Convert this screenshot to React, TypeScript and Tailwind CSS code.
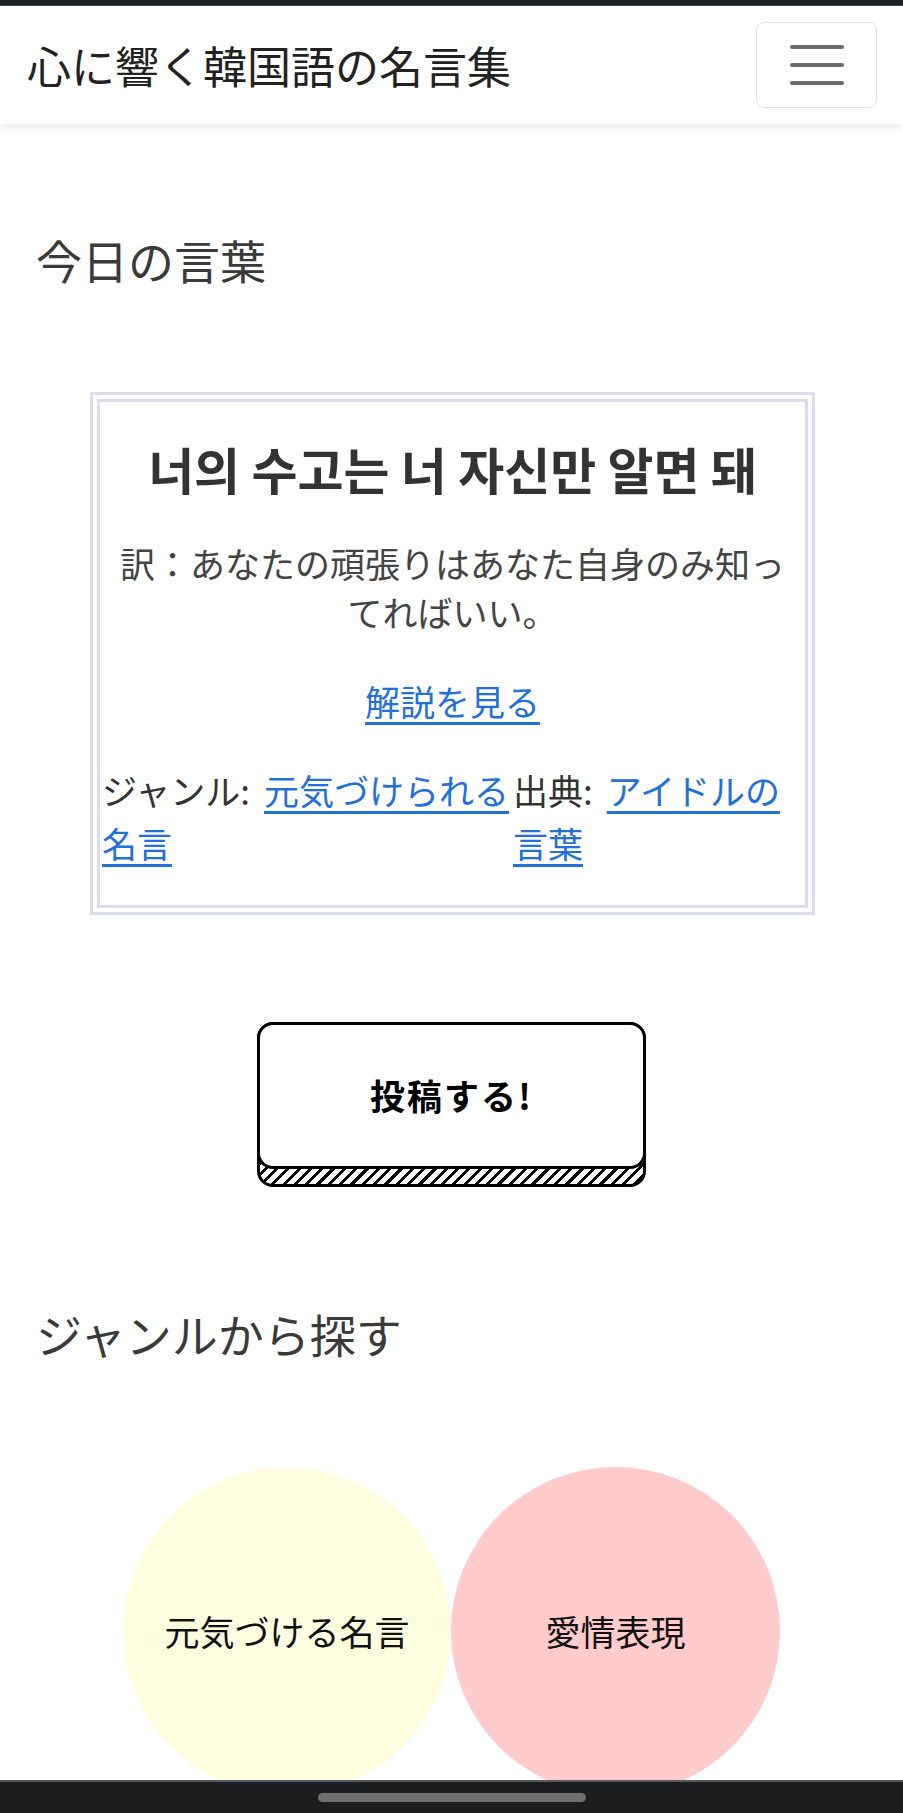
const JP = "font-['Noto_Sans_CJK_JP','Noto_Sans',sans-serif]";

function Toggler() {
  return (
    <button className="flex h-[86px] w-[121px] flex-col items-center justify-center gap-[14px] rounded-[8px] border border-[#e3e3e3] bg-white">
      <span className="h-[4px] w-[54px] rounded-full bg-[#6b6b6b]" />
      <span className="h-[4px] w-[54px] rounded-full bg-[#6b6b6b]" />
      <span className="h-[4px] w-[54px] rounded-full bg-[#6b6b6b]" />
    </button>
  );
}

function QuoteCard() {
  return (
    <div className="ml-[90px] w-[725px] border-[10px] border-double border-[#dcdcef] bg-white pt-[40px] pb-[36px]">
      <h2 className="text-center font-['Noto_Sans_CJK_KR',sans-serif] text-[50px] font-bold leading-[53px] text-[#333]">
        너의 수고는 너 자신만 알면 돼
      </h2>
      <p className="mt-[43px] px-[12px] text-center text-[35px] leading-[49px] text-[#444]">
        訳：あなたの頑張りはあなた自身のみ知ってればいい。
      </p>
      <p className="mt-[40px] text-center text-[35px] leading-[49px]">
        <a href="#" className="text-[#2470d9] underline underline-offset-[6px]">
          解説を見る
        </a>
      </p>
      <div className="mt-[38px] flex pl-[2px] text-[35px] leading-[53px] text-[#333]">
        <div className="w-[411px]">
          ジャンル:
          <a href="#" className="ml-[14px] text-[#2470d9] underline underline-offset-[6px]">
            元気づけられる名言
          </a>
        </div>
        <div className="flex-1">
          出典:
          <a href="#" className="ml-[14px] text-[#2470d9] underline underline-offset-[6px]">
            アイドルの言葉
          </a>
        </div>
      </div>
    </div>
  );
}

function PostButton() {
  return (
    <div className="mx-auto h-[165px] w-[389px] rounded-[16px] border-[3px] border-black bg-[repeating-linear-gradient(135deg,#000_0px,#000_3px,#fff_3px,#fff_8px)]">
      <div className="-mx-[3px] -mt-[3px] flex h-[147px] items-center justify-center rounded-[16px] border-[3px] border-black bg-white">
        <span className="text-[35px] font-bold tracking-[2px] text-black">投稿する!</span>
      </div>
    </div>
  );
}

export default function App() {
  return (
    <div className={`flex h-[1813px] w-full flex-col overflow-hidden bg-white ${JP}`}>
      <div className="h-[6px] shrink-0 border-b border-[#4a4b4d] bg-[#202124]" />
      <header className="relative z-10 flex h-[118px] shrink-0 items-center justify-between bg-white pl-[27px] pr-[26px] shadow-[0_5px_10px_rgba(0,0,0,0.07)]">
        <h1 className="text-[44px] leading-none text-[#222]">心に響く韓国語の名言集</h1>
        <Toggler />
      </header>

      <main className="flex-1 overflow-hidden">
        <h2 className="pt-[108px] pl-[36px] text-[46px] leading-[55px] text-[#3a3a3a]">今日の言葉</h2>

        <div className="mt-[105px]">
          <QuoteCard />
        </div>

        <div className="mt-[107px]">
          <PostButton />
        </div>

        <h2 className="mt-[119px] pl-[36px] text-[46px] leading-[55px] text-[#3a3a3a]">ジャンルから探す</h2>

        <div className="mt-[106px] flex justify-center">
          <div className="flex h-[328px] w-[328px] items-center justify-center rounded-full bg-[#fffde0]">
            <span className="text-[35px] text-[#111]">元気づける名言</span>
          </div>
          <div className="flex h-[328px] w-[329px] items-center justify-center rounded-full bg-[#ffcbcb]">
            <span className="text-[35px] text-[#111]">愛情表現</span>
          </div>
        </div>
      </main>

      <div className="flex h-[33px] shrink-0 items-center justify-center border-t-2 border-[#58595b] bg-[#1c1d1f]">
        <span className="h-[9px] w-[268px] rounded-full bg-[#6e6f71]" />
      </div>
    </div>
  );
}
